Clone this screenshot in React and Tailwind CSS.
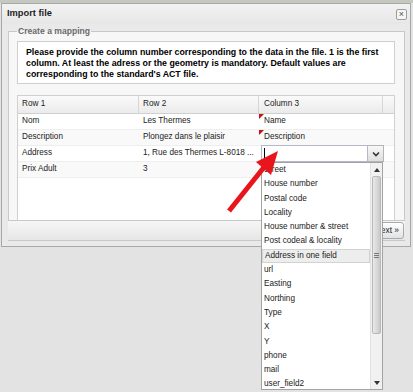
export default function App() {
  const items = [
    "Street",
    "House number",
    "Postal code",
    "Locality",
    "House number & street",
    "Post codeal & locality",
    "Address in one field",
    "url",
    "Easting",
    "Northing",
    "Type",
    "X",
    "Y",
    "phone",
    "mail",
    "user_field2",
  ];
  const rows = [
    { a: "Nom", b: "Les Thermes", c: "Name", dirty: true, alt: false },
    { a: "Description", b: "Plongez dans le plaisir", c: "Description", dirty: true, alt: true },
    { a: "Address", b: "1, Rue des Thermes L-8018 ...", c: "", dirty: false, alt: false },
    { a: "Prix Adult", b: "3", c: "", dirty: false, alt: true },
  ];
  return (
    <div className="relative w-[413px] h-[392px] overflow-hidden bg-[#e3e3e3] font-['Liberation_Sans',Arial,sans-serif] text-[#222]">
      <div className="h-[3px] bg-[#c5c8be]" />
      <div className="ml-[1px] w-[410px] h-[244px] border border-[#a8a8a8] bg-[#e9e9e9] flex flex-col">
        {/* title bar */}
        <div className="h-[20px] flex items-center justify-between pl-[5px] pr-[3px] bg-gradient-to-b from-[#f2f2f2] to-[#e7e7e7]">
          <span className="text-[9.3px] font-bold leading-none text-[#1e1e1e]">Import file</span>
          <span className="w-[11px] h-[11px] border border-[#9c9c9c] rounded-[2px] bg-[#f6f6f6] flex items-center justify-center text-[9px] leading-none text-[#555]">
            ×
          </span>
        </div>
        {/* fieldset */}
        <fieldset className="ml-[6px] mt-[2px] w-[397px] border border-[#c8c8c8] px-[8px] bg-[#f7f7f7]">
          <legend className="px-[1px] text-[8.6px] leading-[10px] font-bold text-[#6b6b6b]">
            Create a mapping
          </legend>
          <div className="mt-[5px] w-[378px] h-[43px] border border-[#cfcfcf] bg-white pl-[8px] pt-[5px] text-[8.8px] leading-[11px] font-bold text-black whitespace-nowrap">
            Please provide the column number corresponding to the data in the file. 1 is the first
            <br />
            column. At least the adress or the geometry is mandatory. Default values are
            <br />
            corresponding to the standard's ACT file.
          </div>
          <div className="mt-[11px] w-[378px] h-[125px] border-x border-t border-[#d0d0d0] bg-white flex flex-col text-[8.2px]">
            <div className="h-[18px] flex border-b border-[#d0d0d0] bg-gradient-to-b from-[#fafafa] to-[#ebebeb] shrink-0">
              <div className="w-[121px] border-r border-[#d6d6d6] pl-[4px] flex items-center">Row 1</div>
              <div className="w-[120px] border-r border-[#d6d6d6] pl-[4px] flex items-center">Row 2</div>
              <div className="w-[124px] border-r border-[#d6d6d6] pl-[5px] flex items-center">Column 3</div>
              <div className="flex-1" />
            </div>
            {rows.map((r) => (
              <div
                key={r.a}
                className={`h-[16px] flex border-b border-[#eeeeee] shrink-0 ${r.alt ? "bg-[#f9f9f9]" : "bg-white"}`}
              >
                <div className="w-[121px] pl-[4px] flex items-center whitespace-nowrap">{r.a}</div>
                <div className="w-[120px] pl-[4px] flex items-center whitespace-nowrap overflow-hidden">{r.b}</div>
                <div className="relative w-[124px] pl-[5px] flex items-center whitespace-nowrap">
                  {r.dirty && (
                    <span className="absolute left-0 top-0 w-0 h-0 border-t-[5px] border-r-[5px] border-t-[#c81010] border-r-transparent" />
                  )}
                  {r.c}
                </div>
              </div>
            ))}
          </div>
        </fieldset>
        {/* bottom toolbar */}
        <div className="ml-[6px] w-[397px] h-[20px] border-b border-[#c8c8c8] bg-gradient-to-b from-[#f6f6f6] to-[#e6e6e6] flex items-center justify-end pr-[1px]">
          <div className="w-[50px] h-[17px] border border-[#a9a9a9] rounded-[3px] bg-gradient-to-b from-white to-[#e2e2e2] text-[8.4px] flex items-center justify-end pr-[4px]">
            Next »
          </div>
        </div>
      </div>

      {/* combo editor */}
      <div className="absolute left-[261px] top-[145px] flex">
        <div className="relative w-[107px] h-[17px] border border-[#b5b8c8] bg-white">
          <span className="absolute left-[2px] top-[2px] w-px h-[11px] bg-black" />
        </div>
        <div className="w-[16px] h-[17px] border border-[#b5b5b5] border-l-0 bg-gradient-to-b from-[#f8f8f8] to-[#dedede] flex items-center justify-center">
          <svg width="8" height="6" viewBox="0 0 8 6">
            <path d="M1 1.5 L4 4.5 L7 1.5" fill="none" stroke="#333" strokeWidth="1.6" />
          </svg>
        </div>
      </div>

      {/* dropdown list */}
      <div className="absolute left-[261px] top-[162px] w-[122px] h-[228px] border border-[#a3a3a3] bg-white text-[8.2px] text-[#1a1a1a]">
        <div className="w-[108px]">
          {items.map((it) => (
            <div
              key={it}
              className={`h-[14.3px] flex items-center pl-[2px] whitespace-nowrap ${
                it === "Address in one field" ? "bg-[#ededed] border border-[#d2d2d2] pl-[1px]" : ""
              }`}
            >
              {it}
            </div>
          ))}
        </div>
        {/* scrollbar */}
        <div className="absolute right-0 top-0 w-[12px] h-full bg-[#f1f1f1] border-l border-[#e2e2e2] flex flex-col">
          <div className="h-[13px] flex items-center justify-center">
            <svg width="6" height="4" viewBox="0 0 6 4">
              <path d="M0 4 L3 0 L6 4 Z" fill="#333" />
            </svg>
          </div>
          <div className="h-[158px] mx-[1px] rounded-[2px] border border-[#b9b9b9] bg-gradient-to-r from-[#e9e9e9] via-[#dadada] to-[#c9c9c9] flex flex-col items-center justify-center gap-[1px]">
            <span className="w-[5px] h-px bg-[#777]" />
            <span className="w-[5px] h-px bg-[#777]" />
            <span className="w-[5px] h-px bg-[#777]" />
          </div>
          <div className="flex-1" />
          <div className="h-[12px] flex items-center justify-center">
            <svg width="6" height="4" viewBox="0 0 6 4">
              <path d="M0 0 L3 4 L6 0 Z" fill="#333" />
            </svg>
          </div>
        </div>
      </div>

      {/* red arrow */}
      <svg className="absolute left-0 top-0 pointer-events-none" width="413" height="392" viewBox="0 0 413 392">
        <line x1="229" y1="211" x2="265" y2="166" stroke="#e8161c" strokeWidth="5" />
        <polygon points="278,151 256,162 271,175" fill="#e8161c" />
      </svg>
    </div>
  );
}
